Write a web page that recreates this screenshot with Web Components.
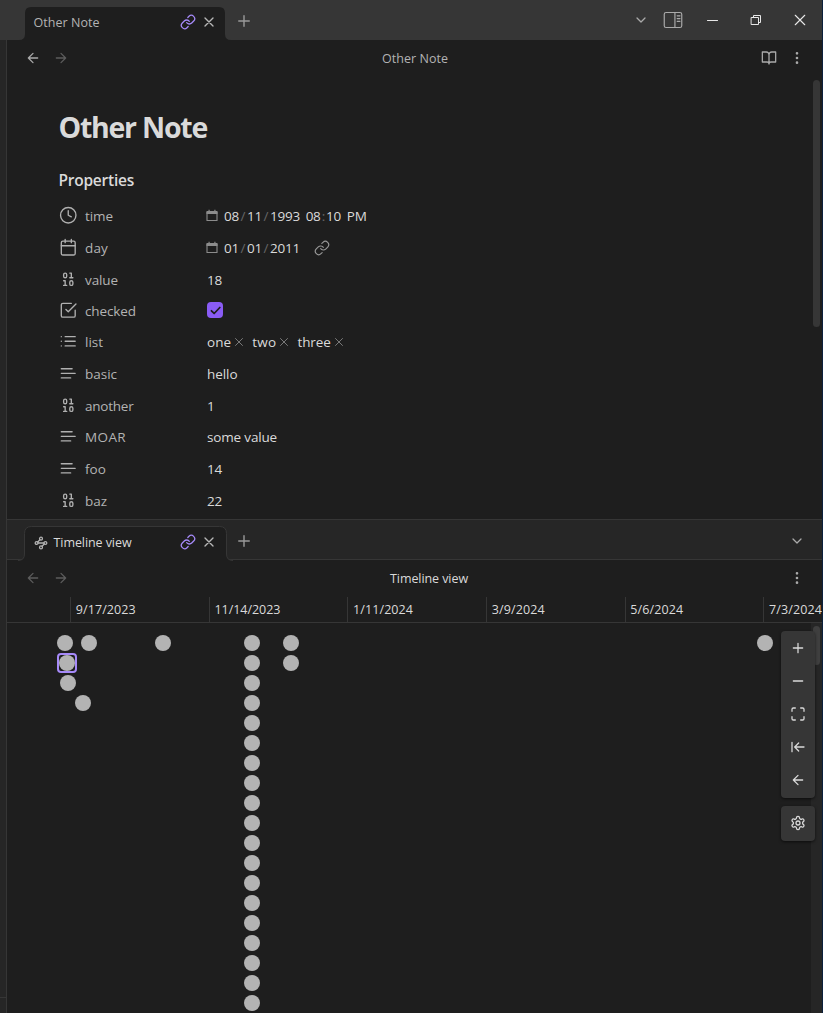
<!DOCTYPE html>
<html lang="en">
<head>
<meta charset="utf-8">
<title>Other Note</title>
<style>
html,body{margin:0;height:100%;background:#1e1e1e;overflow:hidden}
body{font-family:"Open Sans","Noto Sans",sans-serif;font-size:12.5px;color:#dadada}
</style>
</head>
<body>
<app-window></app-window>
<script>
const ICONS = {
  link:'<path d="M10 13a5 5 0 0 0 7.54.54l3-3a5 5 0 0 0-7.07-7.07l-1.72 1.71"/><path d="M14 11a5 5 0 0 0-7.54-.54l-3 3a5 5 0 0 0 7.07 7.07l1.71-1.71"/>',
  x:'<path d="M18 6 6 18M6 6l12 12"/>',
  plus:'<path d="M5 12h14M12 5v14"/>',
  minus:'<path d="M5 12h14"/>',
  down:'<path d="m6 9 6 6 6-6"/>',
  left:'<path d="m12 19-7-7 7-7M19 12H5"/>',
  right:'<path d="M5 12h14M12 5l7 7-7 7"/>',
  book:'<path d="M2 3h6a4 4 0 0 1 4 4v14a3 3 0 0 0-3-3H2zM22 3h-6a4 4 0 0 0-4 4v14a3 3 0 0 1 3-3h7z"/>',
  dots:'<circle cx="12" cy="12" r="1"/><circle cx="12" cy="5" r="1"/><circle cx="12" cy="19" r="1"/>',
  clock:'<circle cx="12" cy="12" r="10"/><path d="M12 6v6l4 2"/>',
  calendar:'<rect x="3" y="4" width="18" height="18" rx="2"/><path d="M16 2v4M8 2v4M3 10h18"/>',
  binary:'<rect x="14" y="14" width="4" height="6" rx="2"/><rect x="6" y="4" width="4" height="6" rx="2"/><path d="M6 20h4M14 10h4M6 14h2v6M14 4h2v6"/>',
  check:'<path d="m9 11 3 3L22 4"/><path d="M21 12v7a2 2 0 0 1-2 2H5a2 2 0 0 1-2-2V5a2 2 0 0 1 2-2h11"/>',
  list:'<path d="M8 6h13M8 12h13M8 18h13M3 6h.01M3 12h.01M3 18h.01"/>',
  text:'<path d="M17 6.1H3M21 12.1H3M15.1 18H3"/>',
  max:'<path d="M8 3H5a2 2 0 0 0-2 2v3M21 8V5a2 2 0 0 0-2-2h-3M3 16v3a2 2 0 0 0 2 2h3M16 21h3a2 2 0 0 0 2-2v-3"/>',
  start:'<path d="M3 19V5M13 6l-6 6 6 6M7 12h14"/>',
  gear:'<path d="M12.22 2h-.44a2 2 0 0 0-2 2v.18a2 2 0 0 1-1 1.73l-.43.25a2 2 0 0 1-2 0l-.15-.08a2 2 0 0 0-2.73.73l-.22.38a2 2 0 0 0 .73 2.73l.15.1a2 2 0 0 1 1 1.72v.51a2 2 0 0 1-1 1.74l-.15.09a2 2 0 0 0-.73 2.73l.22.38a2 2 0 0 0 2.73.73l.15-.08a2 2 0 0 1 2 0l.43.25a2 2 0 0 1 1 1.73V20a2 2 0 0 0 2 2h.44a2 2 0 0 0 2-2v-.18a2 2 0 0 1 1-1.73l.43-.25a2 2 0 0 1 2 0l.15.08a2 2 0 0 0 2.73-.73l.22-.39a2 2 0 0 0-.73-2.73l-.15-.08a2 2 0 0 1-1-1.74v-.5a2 2 0 0 1 1-1.74l.15-.09a2 2 0 0 0 .73-2.73l-.22-.38a2 2 0 0 0-2.73-.73l-.15.08a2 2 0 0 1-2 0l-.43-.25a2 2 0 0 1-1-1.73V4a2 2 0 0 0-2-2z"/><circle cx="12" cy="12" r="3"/>',
  graph:'<circle cx="12" cy="4.5" r="2.5"/><path d="m10.2 6.3-3.9 3.9"/><circle cx="4.5" cy="12" r="2.5"/><path d="M7 12h10"/><circle cx="19.5" cy="12" r="2.5"/><path d="m13.8 17.7 3.9-3.9"/><circle cx="12" cy="19.5" r="2.5"/>',
  sidebar:'<rect x="1.5" y="3" width="21" height="18" rx="2.2"/><path d="M14.3 3v18M17 7h3.4M17 10.3h3.4M17 13.6h3.4"/>',
  winmin:'<path d="M1 12h22"/>',
  restore:'<path d="M3 7h14v14H3zM7 7V3h14v14h-4"/>',
  winx:'<path d="M2.5 2.5l19 19M21.5 2.5l-19 19"/>',
  tick:'<path d="m4.5 12.5 5 5L20 6.5"/>'
};

class Base extends HTMLElement {
  constructor(){ super(); this.attachShadow({mode:'open'}); }
  a(n,d=''){ return this.getAttribute(n) ?? d; }
  connectedCallback(){
    if(this.shadowRoot.childNodes.length) return;
    const t=document.createElement('template');
    t.innerHTML=this.view();
    this.shadowRoot.append(t.content.cloneNode(true));
  }
}

class UiIcon extends Base {
  view(){
    const s=this.a('size','18');
    return `<style>:host{display:block;flex:none;width:${s}px;height:${s}px}svg{display:block}</style>
    <svg width="${s}" height="${s}" viewBox="0 0 24 24" fill="none" stroke="currentColor" stroke-width="${this.a('weight','1.9')}" stroke-linecap="round" stroke-linejoin="round">${ICONS[this.a('name')]}</svg>`;
  }
}

/* A single-line label whose tracking is adjusted to an intended width. */
class UiText extends Base {
  view(){ return `<style>:host{display:inline-block;white-space:pre;flex:none;padding-top:var(--drop,0)}</style><slot></slot>`; }
  connectedCallback(){
    super.connectedCallback();
    const w=parseFloat(this.a('w','0'));
    if(w && !this.style.letterSpacing){
      const nat=this.getBoundingClientRect().width;
      this.style.letterSpacing=((w-nat)/this.textContent.length).toFixed(3)+'px';
    }
  }
}

class PaneTab extends Base {
  view(){
    const lined=this.hasAttribute('lined');
    return `<style>
    :host{display:flex;position:relative;box-sizing:border-box;width:200px;height:33px;flex:none;align-items:center;padding:0 8px 0 8.5px}
    .bg{position:absolute;left:-7px;top:-1px;z-index:0}
    .name{position:relative;flex:1;display:flex;align-items:center;gap:6px;line-height:18px;padding-bottom:1px;color:${lined?'#dadada':'#b3b3b3'}}
    .link{position:relative;color:#a68af9;margin-right:5px;top:-1.5px}
    .x{position:relative;color:#b8b8b8;top:-1.5px}
    </style>
    <svg class="bg" width="215" height="35"><path d="${lined?'M0 35V34.5Q6.5 34.5 6.5 28V7.5Q6.5 .5 13.5 .5H201.5Q208.5 .5 208.5 7.5V28Q208.5 34.5 215 34.5V35':'M1 34Q7 34 7 28V7Q7 1 13 1H201Q207 1 207 7V28Q207 34 213 34Z'}" fill="#1e1e1e" stroke="${lined?'#363636':'none'}"/>${lined?'<path d="M4 34.5H211" stroke="#1e1e1e"/>':''}</svg>
    <div class="name"><slot></slot></div>
    <ui-icon class="link" name="link" size="16"></ui-icon>
    <ui-icon class="x" name="x" size="16" weight="2"></ui-icon>`;
  }
}

class ViewHeader extends Base {
  view(){
    return `<style>
    :host{display:flex;height:36px;align-items:center;box-sizing:border-box;padding:0 17px 0 18px}
    .side{flex:1;display:flex;gap:12px;color:#5c5c5c}
    .side .on{color:#aaa}.end{justify-content:flex-end;color:#aaa}
    .t{line-height:18px;padding-top:2px;padding-left:var(--shift,0)}
    </style>
    <div class="side"><ui-icon name="left" size="16" ${this.hasAttribute('back')?'class="on"':''}></ui-icon><ui-icon name="right" size="16"></ui-icon></div>
    <div class="t"><slot></slot></div>
    <div class="side end">${this.hasAttribute('book')?'<ui-icon name="book" size="16"></ui-icon>':''}<ui-icon name="dots" size="16" weight="2"></ui-icon></div>`;
  }
}

class PropRow extends Base {
  view(){
    return `<style>
    :host{display:grid;grid-template-columns:26.5px 122px 1fr;grid-template-rows:31px;height:32px;align-items:center;font-size:13.5px;line-height:21px;--drop:2px}
    :host([tight]){height:31px}
    ui-icon{color:#b0b0b0;position:relative;top:-.5px}
    .k{color:#b3b3b3;display:flex}.v{display:flex;align-items:center}
    </style>
    <ui-icon name="${this.a('icon')}" size="18.5" weight="1.75"></ui-icon>
    <div class="k"><ui-text w="${this.a('w')}">${this.a('key')}</ui-text></div><div class="v"><slot></slot></div>`;
  }
}

class DateField extends Base {
  view(){
    return `<style>:host{display:flex;align-items:center;gap:6px}svg{display:block;margin-left:-1px}</style>
    <svg width="12" height="13" viewBox="0 0 12 13"><path d="M1 3.5h10v8H1z" fill="none" stroke="#8c8c8c" stroke-width="1.1"/><path d="M.5 2h11v3H.5zM2.5 .7h1.2V2H2.5zM8.3 .7h1.2V2H8.3z" fill="#8c8c8c"/></svg><slot></slot>`;
  }
}

class ListPill extends Base {
  view(){
    return `<style>:host{display:flex;align-items:center;color:#dadada}ui-icon{color:#808080;margin:0 6.3px 0 1px}</style>
    <ui-text w="${this.a('w')}"><slot></slot></ui-text><ui-icon name="x" size="14" weight="1.6"></ui-icon>`;
  }
  connectedCallback(){
    super.connectedCallback();
    const t=this.shadowRoot.querySelector('ui-text');
    t.textContent=this.a('label');
  }
}

class NotePane extends Base {
  view(){
    return `<style>
    :host{display:flex;flex-direction:column;height:479px;overflow:hidden;position:relative}
    .body{padding:35px 0 0 51.5px}
    h1{margin:0;font-size:28.5px;line-height:32px;font-weight:700}
    h2{margin:26px 0 9px;font-size:15.5px;line-height:22px;font-weight:600}
    h2 ui-text{position:relative;top:-.5px}
    s{text-decoration:none;color:#666;display:inline-block;width:8px;text-align:center}
    s.c{width:5.5px}
    b{display:inline-block;width:5.7px}
    .date{letter-spacing:-.23px}
    .link{color:#999;margin-left:14.5px}
    .cb{width:16px;height:16px;border-radius:4px;background:#8a5cf5;color:#1e1e1e;display:flex;align-items:center;justify-content:center;position:relative;top:-.5px}
    .bar{position:absolute;right:2px;top:40px;width:7px;height:247px;border-radius:4px;background:#363636}
    </style>
    <view-header back book><ui-text w="66" style="color:#b3b3b3">Other Note</ui-text></view-header>
    <div class="body">
      <h1><ui-text w="148.5">Other Note</ui-text></h1>
      <h2><ui-text w="75.5">Properties</ui-text></h2>
      <prop-row icon="clock" key="time" w="28"><date-field><ui-text class="date">08<s>/</s>11<s>/</s>1993<b> </b>08<s class="c">:</s>10<b> </b>PM</ui-text></date-field></prop-row>
      <prop-row icon="calendar" key="day" w="23"><date-field><ui-text class="date">01<s>/</s>01<s>/</s>2011</ui-text></date-field><ui-icon class="link" name="link" size="16" weight="1.7"></ui-icon></prop-row>
      <prop-row tight icon="binary" key="value" w="33"><ui-text w="15">18</ui-text></prop-row>
      <prop-row tight icon="check" key="checked" w="51"><div class="cb"><ui-icon name="tick" size="13" weight="3.2"></ui-icon></div></prop-row>
      <prop-row icon="list" key="list" w="18"><list-pill label="one" w="24"></list-pill><list-pill label="two" w="24"></list-pill><list-pill label="three" w="33"></list-pill></prop-row>
      <prop-row icon="text" key="basic" w="32"><ui-text w="30.5">hello</ui-text></prop-row>
      <prop-row tight icon="binary" key="another" w="48.5"><ui-text w="7.5">1</ui-text></prop-row>
      <prop-row icon="text" key="MOAR" w="41"><ui-text w="70">some value</ui-text></prop-row>
      <prop-row icon="text" key="foo" w="21"><ui-text w="15">14</ui-text></prop-row>
      <prop-row icon="binary" key="baz" w="22"><ui-text w="15">22</ui-text></prop-row>
    </div>
    <div class="bar"></div>`;
  }
}

class TimeAxis extends Base {
  view(){
    const d=[['9/17/2023',60],['11/14/2023',66],['1/11/2024',60],['3/9/2024',53],['5/6/2024',53],['7/3/2024',53]];
    return `<style>
    :host{display:flex;height:26px;box-sizing:border-box;border-bottom:1px solid #363636;padding-left:63px;margin-top:1px;overflow:hidden}
    div{flex:0 0 138.65px;box-sizing:border-box;border-left:1px solid #363636;padding-left:4.8px;line-height:26px}
    </style>${d.map(([t,w])=>`<div><ui-text w="${w}">${t}</ui-text></div>`).join('')}`;
  }
}

class ToolGroup extends Base {
  view(){
    return `<style>:host{display:flex;flex-direction:column;width:34px;box-sizing:border-box;border-radius:4px;background:#363636;color:#dadada;box-shadow:0 1px 3px #0009;align-items:center}
    ::slotted(ui-icon){margin:8.5px 0}</style><slot></slot>`;
  }
}

class TimeCanvas extends Base {
  view(){
    const pts=[[65,0],[89,0],[163,0],[291,0],[765,0],[67,1],[291,1],[68,2],[83,3]];
    for(let i=0;i<19;i++) pts.push([252,i]);
    return `<style>
    :host{display:block;position:relative;flex:1;overflow:hidden}
    i{position:absolute;width:16px;height:16px;border-radius:50%;background:#b3b3b3}
    .sel{position:absolute;left:50px;top:30px;width:16px;height:16px;border:2px solid #a68af9;border-radius:4px}
    .track{position:absolute;right:0;top:0;bottom:0;width:11px;background:#262626}
    .thumb{position:absolute;right:2px;top:3px;width:7px;height:39px;border-radius:4px;background:#3f3f3f}
    .tools{position:absolute;right:7px;top:8px;display:flex;flex-direction:column;gap:8px}
    </style>
    ${pts.map(([x,r])=>`<i style="left:${x-15}px;top:${12+r*20}px"></i>`).join('')}
    <div class="track"></div><div class="sel"></div><div class="thumb"></div>
    <div class="tools">
      <tool-group style="height:167px"><ui-icon name="plus" size="16"></ui-icon><ui-icon name="minus" size="16"></ui-icon><ui-icon name="max" size="16"></ui-icon><ui-icon name="start" size="16"></ui-icon><ui-icon name="left" size="16"></ui-icon></tool-group>
      <tool-group style="height:35px"><ui-icon name="gear" size="16" style="margin:9px 0"></ui-icon></tool-group>
    </div>`;
  }
}

class TimelinePane extends Base {
  view(){
    return `<style>
    :host{display:flex;flex-direction:column;flex:1;min-height:0;border-top:1px solid #363636}
    .tabs{display:flex;height:40px;box-sizing:border-box;background:#262626;border-bottom:1px solid #363636;padding:7px 17px 0 18px;flex:none}
    .plus{color:#999;margin:5px 0 0 10px}.down{color:#aaa;margin:6px 0 0 auto}
    view-header{--shift:28px}
    </style>
    <div class="tabs"><pane-tab lined><ui-icon name="graph" size="14" weight="2.2" style="color:#b3b3b3"></ui-icon><ui-text w="78">Timeline view</ui-text></pane-tab>
    <ui-icon class="plus" name="plus"></ui-icon><ui-icon class="down" name="down" size="16"></ui-icon></div>
    <view-header><ui-text w="78">Timeline view</ui-text></view-header>
    <time-axis></time-axis><time-canvas></time-canvas>`;
  }
}

class TitleBar extends Base {
  view(){
    return `<style>
    :host{display:flex;height:40px;box-sizing:border-box;background:#363636;padding:7px 15px 0 25px;flex:none}
    .plus{color:#999;margin:5px 0 0 10px}
    .r{margin-left:auto;display:flex;height:26px;align-items:center;color:#aaa}
    .w{color:#e8e8e8}
    </style>
    <pane-tab><ui-text w="66">Other Note</ui-text></pane-tab>
    <ui-icon class="plus" name="plus"></ui-icon>
    <div class="r"><ui-icon name="down" size="16"></ui-icon><ui-icon name="sidebar" size="20" weight="1.4" style="margin-left:14px"></ui-icon>
    <ui-icon class="w" name="winmin" size="11" weight="2.2" style="margin-left:23.5px"></ui-icon>
    <ui-icon class="w" name="restore" size="12" weight="2" style="margin-left:32.5px"></ui-icon>
    <ui-icon class="w" name="winx" size="12" weight="2.2" style="margin-left:32px;margin-right:1px"></ui-icon></div>`;
  }
}

class AppWindow extends Base {
  view(){
    return `<style>
    :host{display:flex;flex-direction:column;width:823px;height:1013px;box-sizing:border-box;border-right:1px solid #0c203c;background:#1e1e1e;overflow:hidden}
    .main{display:flex;flex:1;min-height:0}
    .edge{width:7px;box-sizing:border-box;background:#262626;border-right:1px solid #363636;display:flex;flex-direction:column;justify-content:flex-end;flex:none}
    .edge div{height:15px;border-top:1px solid #363636}
    .col{flex:1;min-width:0;display:flex;flex-direction:column}
    </style>
    <title-bar></title-bar>
    <div class="main"><div class="edge"><div></div></div><div class="col"><note-pane></note-pane><timeline-pane></timeline-pane></div></div>`;
  }
}

const parts={'app-window':AppWindow,'title-bar':TitleBar,'note-pane':NotePane,'timeline-pane':TimelinePane,'pane-tab':PaneTab,'view-header':ViewHeader,'prop-row':PropRow,'date-field':DateField,'list-pill':ListPill,'time-axis':TimeAxis,'time-canvas':TimeCanvas,'tool-group':ToolGroup,'ui-icon':UiIcon,'ui-text':UiText};
for(const [n,c] of Object.entries(parts)) customElements.define(n,c);
</script>
</body>
</html>
